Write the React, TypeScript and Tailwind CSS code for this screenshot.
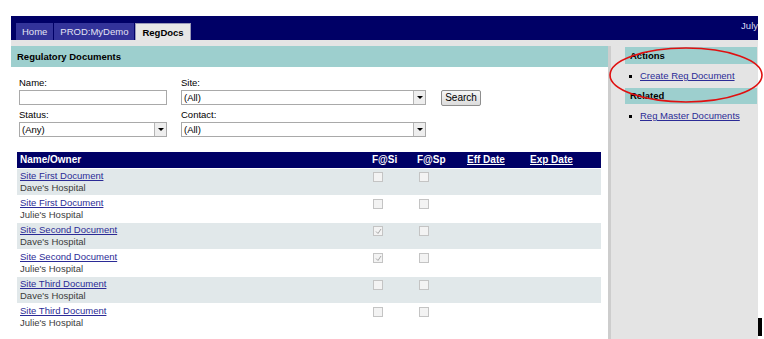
import React from 'react';

type Row = { name: string; owner: string; si: boolean };

const rows: Row[] = [
  { name: 'Site First Document', owner: "Dave's Hospital", si: false },
  { name: 'Site First Document', owner: "Julie's Hospital", si: false },
  { name: 'Site Second Document', owner: "Dave's Hospital", si: true },
  { name: 'Site Second Document', owner: "Julie's Hospital", si: true },
  { name: 'Site Third Document', owner: "Dave's Hospital", si: false },
  { name: 'Site Third Document', owner: "Julie's Hospital", si: false },
];

function Select({ value, width }: { value: string; width: string }) {
  return (
    <div className={`${width} h-[15px] flex border border-[#a9a9a9] bg-white`}>
      <div className="flex-1 pl-[2px] leading-[13px] text-black">{value}</div>
      <div className="w-[12px] h-[13px] bg-[#eeeeee] border-l border-[#b5b5b5] flex items-center justify-center">
        <div className="w-0 h-0 border-l-[3px] border-r-[3px] border-t-[3px] border-l-transparent border-r-transparent border-t-black" />
      </div>
    </div>
  );
}

function Box({ checked }: { checked: boolean }) {
  return (
    <div className="w-[10px] h-[10px] border border-[#c4c4c4] bg-[#f3f3f3] flex items-center justify-center">
      {checked && (
        <svg width="7" height="7" viewBox="0 0 7 7">
          <path d="M1 3.5 L3 5.5 L6 1" fill="none" stroke="#a8a8a8" strokeWidth="1" />
        </svg>
      )}
    </div>
  );
}

export default function App() {
  return (
    <div className="relative w-[764px] h-[339px] overflow-hidden bg-white flex text-[9.5px] font-['Liberation_Sans',Arial,sans-serif]">
      <div className="w-[11px] shrink-0" />

      <div className="w-[747px] shrink-0 flex flex-col pt-[16px]">
        {/* Top navigation */}
        <div className="h-[24px] bg-[#000066] flex items-end pl-[5px] gap-[1px]">
          <div className="h-[17px] px-[6px] bg-[#33339a] text-[#e4e4f4] leading-[17px]">Home</div>
          <div className="h-[17px] px-[6px] bg-[#33339a] text-[#e4e4f4] leading-[17px]">PROD:MyDemo</div>
          <div className="h-[17px] px-[6px] bg-[#e6e6e6] text-black font-bold leading-[17px] border-t border-l border-r border-[#9a9ab8]">RegDocs</div>
          <div className="flex-1" />
          <div className="h-[24px] whitespace-nowrap text-[#dcdcf0] leading-[20px]">July</div>
        </div>
        <div className="h-[6px] bg-[#e4e4e4]" />

        <div className="flex flex-1">
          {/* Main panel */}
          <div className="w-[597px] shrink-0 flex flex-col bg-white">
            <div className="h-[21px] bg-[#9dcfce] pl-[6px] font-bold text-black leading-[21px]">Regulatory Documents</div>

            <div className="pl-[8px] pt-[10px] flex flex-col">
              <div className="flex">
                <div className="w-[162px] flex flex-col">
                  <div className="h-[13px] leading-[12px] text-black">Name:</div>
                  <div className="w-[148px] h-[15px] border border-[#a9a9a9] bg-white" />
                </div>
                <div className="flex flex-col">
                  <div className="h-[13px] leading-[12px] text-black">Site:</div>
                  <Select value="(All)" width="w-[245px]" />
                </div>
                <div className="ml-[15px] pt-[13px]">
                  <div className="w-[40px] h-[16px] border border-[#8e8e8e] rounded-[2px] bg-gradient-to-b from-[#f6f6f6] to-[#dcdcdc] text-center leading-[14px] text-black text-[10px]">Search</div>
                </div>
              </div>
              <div className="flex mt-[3px]">
                <div className="w-[162px] flex flex-col">
                  <div className="h-[13px] leading-[12px] text-black">Status:</div>
                  <Select value="(Any)" width="w-[148px]" />
                </div>
                <div className="flex flex-col">
                  <div className="h-[13px] leading-[12px] text-black">Contact:</div>
                  <Select value="(All)" width="w-[245px]" />
                </div>
              </div>
            </div>

            {/* Results table */}
            <div className="ml-[6px] mt-[15px] w-[584px] flex flex-col">
              <div className="h-[16px] bg-[#000066] grid grid-cols-[353px_45px_50px_63px_73px] text-white font-bold leading-[15px] text-[10px]">
                <div className="pl-[3px]">Name/Owner</div>
                <div className="pl-[2px]">F@Si</div>
                <div className="pl-[2px]">F@Sp</div>
                <div className="pl-[2px] underline">Eff Date</div>
                <div className="pl-[2px] underline">Exp Date</div>
              </div>
              {rows.map((r, i) => (
                <div
                  key={i}
                  className={`h-[27px] grid grid-cols-[353px_45px_50px_63px_73px] ${i % 2 === 0 ? 'bg-[#e1e8ea]' : 'bg-white'} border-t border-white`}
                >
                  <div className="pl-[3px] pt-[1px] flex flex-col leading-[12px]">
                    <span className="text-[#2b2b96] underline">{r.name}</span>
                    <span className="text-[#3c3c3c]">{r.owner}</span>
                  </div>
                  <div className="pl-[3px] pt-[3px]"><Box checked={r.si} /></div>
                  <div className="pl-[4px] pt-[3px]"><Box checked={false} /></div>
                  <div />
                  <div />
                </div>
              ))}
            </div>
          </div>

          {/* Sidebar */}
          <div className="flex-1 bg-[#e4e4e4] border-l-[3px] border-[#cdcdcd] flex flex-col pl-[14px] pr-[1px] pt-[1px]">
            <div className="h-[17px] bg-[#9dcfce] pl-[5px] font-bold text-black leading-[17px]">Actions</div>
            <div className="h-[24px] flex items-center pl-[4px]">
              <div className="w-[3px] h-[3px] bg-black mr-[8px]" />
              <span className="text-[#2b2b96] underline">Create Reg Document</span>
            </div>
            <div className="h-[16px] bg-[#9dcfce] pl-[5px] font-bold text-black leading-[16px]">Related</div>
            <div className="h-[24px] flex items-center pl-[4px]">
              <div className="w-[3px] h-[3px] bg-black mr-[8px]" />
              <span className="text-[#2b2b96] underline">Reg Master Documents</span>
            </div>
          </div>
        </div>
      </div>

      <div className="w-[6px] shrink-0 flex flex-col justify-end pb-[3px]">
        <div className="w-[4px] h-[18px] bg-black" />
      </div>

      {/* Annotation */}
      <svg className="absolute left-0 top-0 pointer-events-none" width="764" height="339">
        <ellipse cx="686" cy="75" rx="76" ry="27" fill="none" stroke="#e01010" strokeWidth="1.6" />
      </svg>
    </div>
  );
}
